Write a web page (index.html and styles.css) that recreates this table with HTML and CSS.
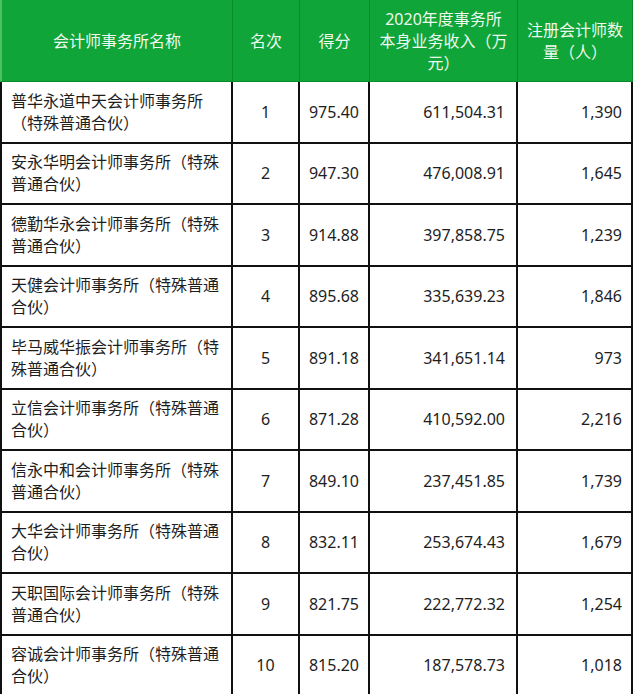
FILE: index.html
```html
<!DOCTYPE html>
<html lang="zh-CN">
<head>
<meta charset="utf-8">
<title>会计师事务所排名</title>
<link rel="stylesheet" href="styles.css">
</head>
<body>
<table class="rank">
  <colgroup>
    <col class="c-name"><col class="c-rank"><col class="c-score"><col class="c-rev"><col class="c-cpa">
  </colgroup>
  <thead>
    <tr>
      <th>会计师事务所名称</th>
      <th>名次</th>
      <th>得分</th>
      <th>2020年度事务所<br>本身业务收入（万<br>元）</th>
      <th>注册会计师数<br>量（人）</th>
    </tr>
  </thead>
  <tbody>
    <tr><td class="name">普华永道中天会计师事务所（特殊普通合伙）</td><td class="rk">1</td><td class="sc">975.40</td><td class="rv">611,504.31</td><td class="cp">1,390</td></tr>
    <tr><td class="name">安永华明会计师事务所（特殊普通合伙）</td><td class="rk">2</td><td class="sc">947.30</td><td class="rv">476,008.91</td><td class="cp">1,645</td></tr>
    <tr><td class="name">德勤华永会计师事务所（特殊普通合伙）</td><td class="rk">3</td><td class="sc">914.88</td><td class="rv">397,858.75</td><td class="cp">1,239</td></tr>
    <tr><td class="name">天健会计师事务所（特殊普通合伙）</td><td class="rk">4</td><td class="sc">895.68</td><td class="rv">335,639.23</td><td class="cp">1,846</td></tr>
    <tr><td class="name">毕马威华振会计师事务所（特殊普通合伙）</td><td class="rk">5</td><td class="sc">891.18</td><td class="rv">341,651.14</td><td class="cp">973</td></tr>
    <tr><td class="name">立信会计师事务所（特殊普通合伙）</td><td class="rk">6</td><td class="sc">871.28</td><td class="rv">410,592.00</td><td class="cp">2,216</td></tr>
    <tr><td class="name">信永中和会计师事务所（特殊普通合伙）</td><td class="rk">7</td><td class="sc">849.10</td><td class="rv">237,451.85</td><td class="cp">1,739</td></tr>
    <tr><td class="name">大华会计师事务所（特殊普通合伙）</td><td class="rk">8</td><td class="sc">832.11</td><td class="rv">253,674.43</td><td class="cp">1,679</td></tr>
    <tr><td class="name">天职国际会计师事务所（特殊普通合伙）</td><td class="rk">9</td><td class="sc">821.75</td><td class="rv">222,772.32</td><td class="cp">1,254</td></tr>
    <tr><td class="name">容诚会计师事务所（特殊普通合伙）</td><td class="rk">10</td><td class="sc">815.20</td><td class="rv">187,578.73</td><td class="cp">1,018</td></tr>
  </tbody>
</table>
</body>
</html>
```

FILE: styles.css
```css
html, body {
  margin: 0;
  padding: 0;
  background: #ffffff;
}

body {
  font-family: "Noto Sans", "Noto Sans CJK SC", sans-serif;
  font-size: 16px;
  color: #1e1e1e;
}

.rank {
  border-collapse: separate;
  border-spacing: 0;
  table-layout: fixed;
  width: 633px;
}

.c-name { width: 233px; }
.c-rank { width: 67px; }
.c-score { width: 70px; }
.c-rev { width: 148px; }
.c-cpa { width: 115px; }

.rank th {
  box-sizing: border-box;
  height: 82px;
  background: #0fa538;
  color: #eef8ee;
  font-weight: normal;
  line-height: 22px;
  text-align: center;
  vertical-align: middle;
  padding: 0 4px;
  border-right: 1px solid #0b8a2c;
  border-bottom: 1px solid #0b8a2c;
}

.rank th:first-child {
  border-left: 2px solid #4cbf62;
}

.rank td {
  box-sizing: border-box;
  height: 61.5px;
  line-height: 22px;
  vertical-align: middle;
  border-right: 2px solid #111111;
  border-bottom: 2px solid #111111;
  padding: 0;
}

.rank td.name {
  border-left: 2px solid #111111;
  padding: 0 8px 0 9px;
  text-align: left;
}

.rank td.rk { text-align: center; }
.rank td.sc { text-align: center; }
.rank td.rv { text-align: right; padding-right: 11px; }
.rank td.cp { text-align: right; padding-right: 9px; }
```
